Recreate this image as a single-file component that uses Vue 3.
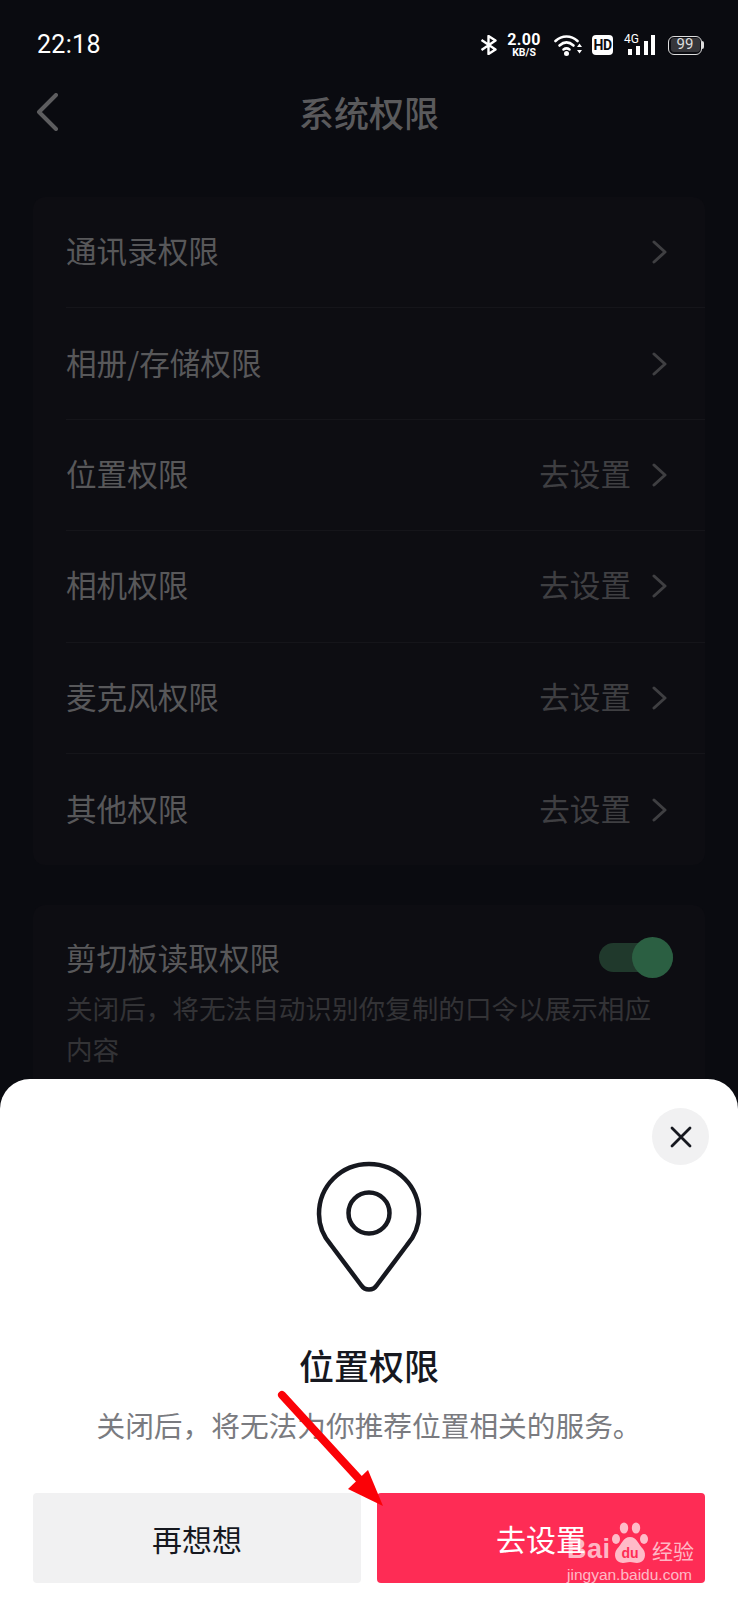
<script setup>
const rows = [
  { name: '通讯录权限', hint: '' },
  { name: '相册/存储权限', hint: '' },
  { name: '位置权限', hint: '去设置' },
  { name: '相机权限', hint: '去设置' },
  { name: '麦克风权限', hint: '去设置' },
  { name: '其他权限', hint: '去设置' }
]
</script>

<template>
  <div class="page">
    <header class="status">
      <span class="time">22:18</span>
      <div class="status-icons">
        <svg class="bt" width="18" height="20" viewBox="0 0 18 20" fill="none" stroke="#fff" stroke-width="2.4" stroke-linejoin="round">
          <path d="M1.5 5 L15.5 14.5 L8.5 19 V1 L15.5 5.5 L1.5 15" />
        </svg>
        <div class="speed">
          <span class="speed-num">2.00</span>
          <span class="speed-unit">KB/S</span>
        </div>
        <svg class="wifi" width="29" height="22" viewBox="0 0 29 22" fill="none">
          <g stroke="#fff" stroke-width="2.6" stroke-linecap="round">
            <path d="M1.5 7 C8 1 17 1 23.5 7" />
            <path d="M5.5 11.5 C10 7.5 15 7.5 19.5 11.5" />
            <path d="M9.5 15.5 C11.5 14 13.5 14 15.5 15.5" />
          </g>
          <circle cx="12.5" cy="19.5" r="2.5" fill="#fff" />
          <path d="M23 13 L25.5 9.5 L28 13 Z M23 16 L25.5 19.5 L28 16 Z" fill="#fff" />
        </svg>
        <span class="hd">HD</span>
        <div class="signal">
          <span class="net">4G</span>
          <svg width="27" height="20" viewBox="0 0 27 20" fill="#fff">
            <rect x="0" y="14" width="4" height="6" />
            <rect x="8" y="11" width="4" height="9" />
            <rect x="16" y="6" width="4" height="14" />
            <rect x="23" y="0" width="4" height="20" />
          </svg>
        </div>
        <div class="battery">
          <span class="battery-body"><span class="battery-fill">99</span></span>
          <span class="battery-nub"></span>
        </div>
      </div>
    </header>

    <nav class="nav">
      <svg class="back" width="22" height="38" viewBox="0 0 22 38" fill="none" stroke="#5d5d5f" stroke-width="4" stroke-linecap="round" stroke-linejoin="round">
        <path d="M20 2 L3 19 L20 36" />
      </svg>
      <h1 class="nav-title">系统权限</h1>
    </nav>

    <main class="content">
      <section class="card list">
        <div v-for="row in rows" :key="row.name" class="row">
          <span class="row-name">{{ row.name }}</span>
          <span class="row-hint">{{ row.hint }}</span>
          <svg class="chev" width="15" height="24" viewBox="0 0 15 24" fill="none" stroke="#3f3f42" stroke-width="3" stroke-linecap="round" stroke-linejoin="round">
            <path d="M2 2 L13 12 L2 22" />
          </svg>
        </div>
      </section>

      <section class="card clip">
        <div class="clip-head">
          <span class="clip-name">剪切板读取权限</span>
          <span class="toggle"><span class="knob"></span></span>
        </div>
        <p class="clip-desc">关闭后，将无法自动识别你复制的口令以展示相应内容</p>
      </section>
    </main>

    <aside class="sheet">
      <div class="close">
        <svg width="22" height="22" viewBox="0 0 22 22" fill="none" stroke="#16181f" stroke-width="2.8" stroke-linecap="round">
          <path d="M2 2 L20 20 M20 2 L2 20" />
        </svg>
      </div>
      <svg class="pin" width="106" height="132" viewBox="0 0 106 132" fill="none" stroke="#16181f" stroke-width="4.5" stroke-linejoin="round">
        <path d="M53 3 C25 3 3 25 3 53 C3 66 8 76 15 84 L45 124 C49 130 57 130 61 124 L91 84 C98 76 103 66 103 53 C103 25 81 3 53 3 Z" />
        <circle cx="53" cy="52" r="20.5" />
      </svg>
      <h2 class="sheet-title">位置权限</h2>
      <p class="sheet-desc">关闭后，将无法为你推荐位置相关的服务。</p>
      <div class="actions">
        <button class="btn btn-ghost">再想想</button>
        <button class="btn btn-primary">去设置</button>
      </div>
    </aside>

    <svg class="arrow" width="120" height="125" viewBox="0 0 120 125">
      <path d="M7 7 L85 92" stroke="#fb0207" stroke-width="8" stroke-linecap="round" fill="none" />
      <path d="M108 118 L73 101 L93 82 Z" fill="#fb0207" />
    </svg>

    <div class="mark">
      <div class="mark-top">
        <span class="mark-bai">Bai</span>
        <svg class="paw" width="38" height="42" viewBox="0 0 38 42" fill="currentColor">
          <ellipse cx="5" cy="17" rx="4" ry="5" />
          <ellipse cx="13" cy="6" rx="4.2" ry="5.5" />
          <ellipse cx="25" cy="6" rx="4.2" ry="5.5" />
          <ellipse cx="33" cy="17" rx="4" ry="5" />
          <path d="M19 15 C12 15 11 22 6 27 C2 32 4 41 12 41 C15 41 16 40 19 40 C22 40 23 41 26 41 C34 41 36 32 32 27 C27 22 26 15 19 15 Z" />
          <text x="19" y="36" text-anchor="middle" font-size="14" font-weight="700" font-family="Liberation Sans, sans-serif" fill="#fe2c55">du</text>
        </svg>
        <span class="mark-cn">经验</span>
      </div>
      <div class="mark-url">jingyan.baidu.com</div>
    </div>
  </div>
</template>

<style>
html, body { margin: 0; padding: 0; background: #0a0b10; }
</style>

<style scoped>
.page {
  position: relative;
  width: 738px;
  height: 1600px;
  overflow: hidden;
  background: #0a0b10;
  font-family: "Noto Sans CJK SC", "Roboto", sans-serif;
}
.status {
  height: 80px;
  box-sizing: border-box;
  padding: 31px 34px 0 37px;
  display: flex;
  justify-content: space-between;
  align-items: flex-start;
  color: #fff;
}
.time {
  font-family: "Roboto", sans-serif;
  font-size: 25px;
  line-height: 28px;
  letter-spacing: 0.3px;
}
.status-icons {
  display: flex;
  align-items: center;
  height: 28px;
}
.bt { margin-right: 9px; }
.speed {
  display: flex;
  flex-direction: column;
  align-items: center;
  width: 34px;
  margin-right: 13px;
  font-family: "Roboto", sans-serif;
  font-weight: 700;
}
.speed-num { font-size: 16px; line-height: 15px; letter-spacing: 0.3px; }
.speed-unit { font-size: 10.5px; line-height: 11px; }
.wifi { margin-right: 9px; }
.hd {
  width: 21px;
  height: 20px;
  border-radius: 4px;
  background: #fff;
  color: #0a0b10;
  font-family: "Roboto", sans-serif;
  font-weight: 700;
  font-size: 14px;
  line-height: 20px;
  text-align: center;
  margin-right: 12px;
  letter-spacing: -0.5px;
}
.signal { position: relative; width: 30px; height: 20px; margin-right: 10px; padding-left: 3px; box-sizing: content-box; }
.net {
  position: absolute;
  left: -1px;
  top: -2px;
  font-family: "Roboto", sans-serif;
  font-size: 12px;
  line-height: 12px;
}
.battery { display: flex; align-items: center; }
.battery-body {
  display: block;
  width: 34px;
  height: 19px;
  border: 1.5px solid #ddd;
  border-radius: 6px;
  padding: 1.5px;
  box-sizing: border-box;
}
.battery-fill {
  display: block;
  height: 100%;
  width: 100%;
  background: #36363a;
  border-radius: 3px;
  color: #ddd;
  font-family: "Roboto", sans-serif;
  font-size: 15px;
  line-height: 13px;
  text-align: center;
}
.battery-nub { width: 2px; height: 8px; background: #ddd; border-radius: 0 2px 2px 0; }

.nav {
  height: 64px;
  position: relative;
  display: flex;
  align-items: center;
  justify-content: center;
}
.back { position: absolute; left: 36px; top: 13px; }
.nav-title {
  margin: 0;
  font-size: 35px;
  font-weight: 500;
  color: #5a5a5c;
  line-height: 44px;
}
.content {
  padding: 53px 33px 0;
  display: flex;
  flex-direction: column;
  gap: 40px;
}
.card {
  background: #0d0d12;
  border-radius: 12px;
}
.list { height: 668px; }
.row {
  height: 111.4px;
  box-sizing: border-box;
  margin-left: 33px;
  padding-right: 38px;
  display: flex;
  align-items: center;
  border-bottom: 1px solid #15151a;
}
.row:last-child { border-bottom: 0; }
.row-name {
  flex: 1;
  font-size: 30.6px;
  color: #58585a;
  margin-bottom: 4px;
}
.row-hint {
  font-size: 30.6px;
  color: #3f3f42;
  margin-right: 21px;
  margin-bottom: 4px;
}
.clip { padding: 29px 33px 40px; min-height: 220px; }
.clip-head {
  display: flex;
  justify-content: space-between;
  align-items: center;
  height: 44px;
  padding-top: 1px;
}
.clip-name { font-size: 30.6px; color: #58585a; }
.toggle {
  position: relative;
  width: 74px;
  height: 29px;
  background: #20392c;
  border-radius: 15px;
  margin-right: -1px;
}
.knob {
  position: absolute;
  right: 0;
  top: -6px;
  width: 41px;
  height: 41px;
  border-radius: 50%;
  background: #2b5f42;
}
.clip-desc {
  margin: 8px 0 0;
  font-size: 26.6px;
  line-height: 41px;
  color: #333336;
}

.sheet {
  position: absolute;
  left: 0;
  right: 0;
  bottom: 0;
  height: 521px;
  box-sizing: border-box;
  padding-top: 82px;
  background: #fff;
  border-radius: 30px 30px 0 0;
  display: flex;
  flex-direction: column;
  align-items: center;
}
.close {
  position: absolute;
  top: 29px;
  right: 29px;
  width: 57px;
  height: 57px;
  border-radius: 50%;
  background: #f1f1f2;
  display: flex;
  align-items: center;
  justify-content: center;
}
.sheet-title {
  margin: 49px 0 0;
  font-size: 35px;
  line-height: 46px;
  font-weight: 500;
  color: #16181f;
}
.sheet-desc {
  margin: 17px 0 0;
  font-size: 28.7px;
  line-height: 40px;
  color: #7a7b80;
}
.actions {
  margin-top: 48px;
  width: 100%;
  box-sizing: border-box;
  padding: 0 33px;
  display: flex;
  gap: 16px;
}
.btn {
  flex: 1;
  height: 90px;
  border: 0;
  border-radius: 4px;
  font-family: inherit;
  font-size: 30px;
  padding: 0;
}
.btn-ghost { background: #f1f1f2; color: #16181f; }
.btn-primary { background: #fe2c55; color: #fff; }

.arrow { position: absolute; left: 275px; top: 1388px; }

.mark {
  position: absolute;
  left: 567px;
  top: 1521px;
  width: 134px;
  color: rgba(255, 255, 255, 0.68);
}
.mark-top { display: flex; align-items: flex-end; height: 43px; }
.mark-bai {
  font-family: "Liberation Sans", sans-serif;
  font-weight: 700;
  font-size: 27px;
  line-height: 30px;
  width: 44px;
  letter-spacing: 0.5px;
}
.mark-cn { font-size: 21px; line-height: 28px; margin-left: 3px; white-space: nowrap; }
.mark-url {
  font-family: "Liberation Sans", sans-serif;
  font-size: 15.5px;
  line-height: 18px;
  margin-top: 2px;
  white-space: nowrap;
}
</style>
